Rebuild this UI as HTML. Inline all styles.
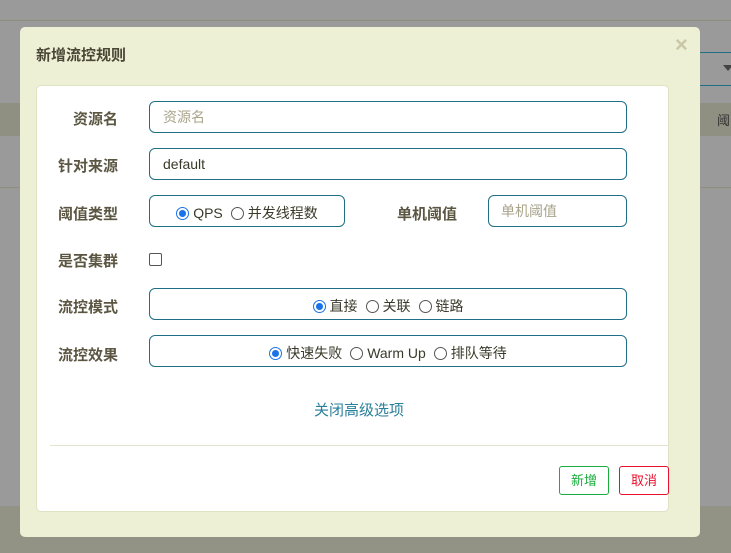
<!DOCTYPE html>
<html style="background:#9a9a9a"><head><meta charset="utf-8"><style>
*{box-sizing:border-box;margin:0;padding:0}
html,body{background:#9a9a9a}
body{width:731px;height:553px;overflow:hidden;font-family:"Liberation Sans","Noto Sans CJK SC",sans-serif;position:relative}
.abs{position:absolute}
.lbl{position:absolute;left:58px;font-size:15px;font-weight:bold;color:#5b5642}
.box{position:absolute;border:1px solid #1f6f86;border-radius:6px;background:#fff;font-size:14px;color:#3a3a2a;display:flex;align-items:center}
.ph{color:#a9a38a}
.r{display:inline-block;width:13px;height:13px;border:1px solid #555;border-radius:50%;margin-right:4px;vertical-align:-2px;background:#fff}
.r.on{border:1.5px solid #1a73e8;background:radial-gradient(circle,#1a73e8 3.2px,#fff 3.8px)}
.opt{margin-right:8px;white-space:nowrap}
.rg{padding-top:3px}
</style></head><body>
<div class="abs" style="left:0;top:0;width:731px;height:553px;background:#9a9a9a"></div>
<div class="abs" style="left:0;top:20px;width:731px;height:1px;background:#8e8d7e"></div>
<div class="abs" style="left:0;top:103px;width:731px;height:33px;background:#8f9082"></div>
<div class="abs" style="left:0;top:187px;width:731px;height:1px;background:#8e8d7e"></div>
<div class="abs" style="left:0;top:506px;width:731px;height:47px;background:#929385"></div>
<div class="abs" style="left:690px;top:52px;width:50px;height:34px;border:1px solid #1f6f86;border-radius:4px"></div>
<div class="abs" style="left:723px;top:65px;width:0;height:0;border-left:5px solid transparent;border-right:5px solid transparent;border-top:6px solid #444"></div>
<div class="abs" style="left:717px;top:110px;font-size:13px;color:#333">阈</div>

<div class="abs" style="left:20px;top:27px;width:680px;height:510px;background:#edf0d4;border-radius:5px"></div>
<div class="abs" style="left:36px;top:44px;font-size:15px;font-weight:bold;color:#4a4636">新增流控规则</div>
<div class="abs" style="left:675px;top:32px;font-size:22px;color:#c9c7a6;font-weight:bold">×</div>
<div class="abs" style="left:36px;top:85px;width:633px;height:427px;background:#fff;border:1px solid #dfe2c3;border-radius:5px"></div>

<div class="lbl" style="left:73px;top:108px">资源名</div>
<div class="box" style="left:149px;top:101px;width:478px;height:32px;padding-left:13px"><span class="ph">资源名</span></div>
<div class="lbl" style="top:155px">针对来源</div>
<div class="box" style="left:149px;top:148px;width:478px;height:32px;padding-left:13px">default</div>
<div class="lbl" style="top:203px">阈值类型</div>
<div class="box rg" style="left:149px;top:195px;width:196px;height:32px;justify-content:center"><span class="opt"><span class="r on"></span>QPS</span><span class="opt" style="margin-right:0"><span class="r"></span>并发线程数</span></div>
<div class="lbl" style="left:397px;top:203px">单机阈值</div>
<div class="box" style="left:488px;top:195px;width:139px;height:32px;padding-left:12px"><span class="ph">单机阈值</span></div>
<div class="lbl" style="top:250px">是否集群</div>
<div class="abs" style="left:149px;top:253px;width:13px;height:13px;border:1px solid #555;border-radius:2px"></div>
<div class="lbl" style="top:296px">流控模式</div>
<div class="box rg" style="left:149px;top:288px;width:478px;height:32px;justify-content:center;padding-left:0"><span class="opt"><span class="r on"></span>直接</span><span class="opt"><span class="r"></span>关联</span><span class="opt" style="margin-right:0"><span class="r"></span>链路</span></div>
<div class="lbl" style="top:344px">流控效果</div>
<div class="box rg" style="left:149px;top:335px;width:478px;height:32px;justify-content:center"><span class="opt"><span class="r on"></span>快速失败</span><span class="opt"><span class="r"></span>Warm Up</span><span class="opt" style="margin-right:0"><span class="r"></span>排队等待</span></div>
<div class="abs" style="left:314px;top:399px;font-size:15px;color:#2a7f9a">关闭高级选项</div>
<div class="abs" style="left:50px;top:445px;width:619px;height:1px;background:#e3e5cf"></div>
<div class="abs" style="left:559px;top:466px;width:50px;height:29px;border:1px solid #1aac3c;border-radius:3px;color:#1aac3c;font-size:13px;text-align:center;line-height:27px">新增</div>
<div class="abs" style="left:619px;top:466px;width:50px;height:29px;border:1px solid #e8102f;border-radius:3px;color:#e8102f;font-size:13px;text-align:center;line-height:27px">取消</div>
</body></html>
